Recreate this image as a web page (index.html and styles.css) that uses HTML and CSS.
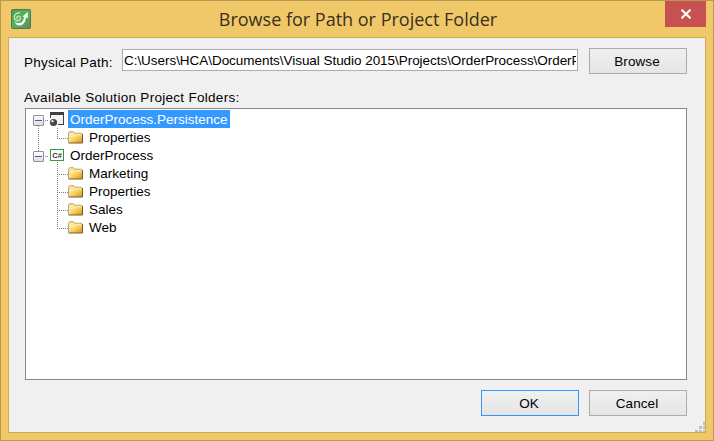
FILE: index.html
```html
<!DOCTYPE html>
<html lang="en">
<head>
<meta charset="utf-8">
<title>Browse for Path or Project Folder</title>
<link rel="stylesheet" href="styles.css">
</head>
<body>
<svg width="0" height="0" class="defs">
  <defs>
    <linearGradient id="gold" x1="0" y1="0" x2="1" y2="1"><stop offset="0" stop-color="#fff3b0"/><stop offset=".5" stop-color="#f8cf60"/><stop offset="1" stop-color="#d98f12"/></linearGradient>
    <linearGradient id="box" x1="0" y1="0" x2="0" y2="1"><stop offset="0" stop-color="#fff"/><stop offset="1" stop-color="#dcdcdc"/></linearGradient>
    <linearGradient id="leaf" x1="0" y1="0" x2="1" y2="1"><stop offset="0" stop-color="#4f9c50"/><stop offset=".5" stop-color="#58b45c"/><stop offset="1" stop-color="#5c8762"/></linearGradient>
    <symbol id="minus" viewBox="0 0 11 11">
      <rect x=".5" y=".5" width="10" height="10" rx=".5" fill="url(#box)" stroke="#919191"/>
      <path d="M2 5.5h7" stroke="#3c5fae"/>
    </symbol>
    <symbol id="folder" viewBox="0 0 16 13">
      <path d="M.5 11.5V2.200L1.500.7h4l1 1.500h7v3" fill="#f5e6a4" stroke="#c0a865"/>
      <path d="M1.500 4.500h4l1.500-1.500h7.500v9h-13z" fill="url(#gold)"/>
      <path d="M.5 12H14.500V3" fill="none" stroke="#705d35"/>
      <path d="M2 5.300h4l1.500-1.500h6" fill="none" stroke="#fff6c4" stroke-width=".8"/>
    </symbol>
  </defs>
</svg>
<div class="window">
  <header class="titlebar">
    <svg class="logo" width="20" height="20" viewBox="0 0 20 20">
      <rect x=".5" y=".5" width="19" height="19" rx="1" fill="url(#leaf)" stroke="#4d7b4c"/>
      <path d="M6.800 10.300c-1.600-.3-1.300-3.100.6-3.300 2.400 0 2.800 3.400.6 4.600C5.300 12.500 3 10.500 3.300 7.800 3.600 5 6 3.400 9 4" fill="none" stroke="#d9efd9" stroke-width="1.100"/>
      <path d="M3.500 12.500c1.200 2.800 3 4.200 5.200 4 3.600-.3 5.800-3.500 6.300-8l1.900.6L16.600 3l-5 4.600 1.700.4c-.7 3.500-2.300 5.700-4.800 6-2 .2-3.500-.3-5-1.500z" fill="#fff"/>
    </svg>
    <h1 class="title">Browse for Path or Project Folder</h1>
    <button class="close" aria-label="Close"><svg width="12" height="10" viewBox="0 0 12 10"><path d="M1.500 .7l9 8.600M10.500 .7l-9 8.600" stroke="#fff" stroke-width="2.100"/></svg></button>
  </header>
  <main class="client">
    <div class="pathrow">
      <label class="pathlabel">Physical Path:</label>
      <div class="field"><span class="pathtext">C:\Users\HCA\Documents\Visual Studio 2015\Projects\OrderProcess\OrderP</span></div>
      <button class="btn">Browse</button>
    </div>
    <div class="caption">Available Solution Project Folders:</div>
    <div class="tree">
      <div class="row">
        <svg width="42" height="18" viewBox="0 0 42 18">
          <use href="#minus" x="7" y="5" width="11" height="11"/>
          <path class="dots" d="M12.500 16v2M19 10.500h4"/>
          <path d="M25 4h12v11h-8z" fill="#f2f2f2"/>
          <path d="M24 8V2h14v13h-6v-1h5V5H25v3z" fill="#3f3f3f"/>
          <circle cx="27.500" cy="12.500" r="3.600" fill="#444"/>
          <circle cx="26.500" cy="11.200" r="1.200" fill="#ddd"/>
        </svg>
        <span class="name selected w-persist">OrderProcess.Persistence</span>
      </div>
      <div class="row child">
        <svg width="61" height="18" viewBox="0 0 61 18">
          <path class="dots" d="M12.500 0v18M31.500 0v11M31 10.500h11"/>
          <use href="#folder" x="42" y="3" width="16" height="13"/>
        </svg>
        <span class="name">Properties</span>
      </div>
      <div class="row">
        <svg width="42" height="18" viewBox="0 0 42 18">
          <path class="dots" d="M12.500 0v5M19 10.500h4M31.500 16v2"/>
          <use href="#minus" x="7" y="5" width="11" height="11"/>
          <rect x="24.500" y="3.500" width="13" height="11" fill="#fff" stroke="#389a3c"/>
          <text x="26.300" y="11.800" class="cs">C#</text>
        </svg>
        <span class="name">OrderProcess</span>
      </div>
      <div class="row child">
        <svg width="61" height="18" viewBox="0 0 61 18"><path class="dots" d="M31.500 0v18M31 10.500h11"/><use href="#folder" x="42" y="3" width="16" height="13"/></svg>
        <span class="name">Marketing</span>
      </div>
      <div class="row child">
        <svg width="61" height="18" viewBox="0 0 61 18"><path class="dots" d="M31.500 0v18M31 10.500h11"/><use href="#folder" x="42" y="3" width="16" height="13"/></svg>
        <span class="name">Properties</span>
      </div>
      <div class="row child">
        <svg width="61" height="18" viewBox="0 0 61 18"><path class="dots" d="M31.500 0v18M31 10.500h11"/><use href="#folder" x="42" y="3" width="16" height="13"/></svg>
        <span class="name">Sales</span>
      </div>
      <div class="row child">
        <svg width="61" height="18" viewBox="0 0 61 18"><path class="dots" d="M31.500 0v11M31 10.500h11"/><use href="#folder" x="42" y="3" width="16" height="13"/></svg>
        <span class="name">Web</span>
      </div>
    </div>
    <div class="actions">
      <button class="btn primary">OK</button>
      <button class="btn">Cancel</button>
    </div>
    <svg class="grip" width="10" height="10" viewBox="0 0 10 10"><path d="M8 0h2v3H8zM4 4h3v3H4zM8 4h2v3H8zM0 8h3v2H0zM4 8h3v2H4zM8 8h2v2H8z" fill="#bfbfbf"/></svg>
  </main>
</div>
</body>
</html>
```
FILE: styles.css
```css
* { box-sizing: border-box; }
body { margin: 0; font: 13.5px/18px "Liberation Sans", Arial, sans-serif; color: #000; }
.defs { position: absolute; }
.window { width: 714px; height: 441px; border: 1px solid #b9994f; background: #f0c869; padding: 0 7px 7px; }
.titlebar { display: flex; height: 36px; align-items: flex-start; }
.logo { margin: 8px 0 0 3px; flex: none; }
.title { flex: 1; margin: 0; padding-left: 20px; text-align: center; font: 400 18px/37px "Open Sans", "Noto Sans", sans-serif; color: #3a3020; white-space: nowrap; }
.close { width: 41px; height: 26px; border: 0; padding: 0; background: #c75050; display: flex; align-items: center; justify-content: center; }
.client { position: relative; height: 396px; border: 1px solid #cfab57; background: #f0f0f0; padding: 10px 18px 0 16px; }
.pathrow { display: flex; height: 26px; }
.pathlabel { width: 98px; margin-left: -1px; padding-top: 6px; white-space: nowrap; letter-spacing: .22px; }
.field { width: 456px; height: 22px; margin-top: 1px; margin-right: 11px; flex: none; padding: 0 1px 0 1px; background: #fff; border: 1px solid #abadb3; }
.pathtext { display: block; overflow: hidden; white-space: nowrap; line-height: 21px; letter-spacing: -.045px; }
.btn { width: 98px; height: 26px; flex: none; padding: 1px 2px 0 0; border: 1px solid #acacac; background: linear-gradient(#f0f0f0, #e5e5e5); font: inherit; letter-spacing: .1px; color: #000; }
.primary { border-color: #3399ff; }
.caption { margin: 15px 0 0 -1px; height: 19px; line-height: 18px; white-space: nowrap; letter-spacing: .29px; }
.tree { height: 272px; background: #fff; border: 1px solid #828790; padding-top: 1px; }
.row { display: flex; height: 18px; }
.row svg { flex: none; }
.name { padding: 0 2px; line-height: 20px; white-space: nowrap; }
.selected { background: #3399ff; color: #fff; }
.w-persist { width: 162px; }
.dots { fill: none; stroke: #808080; stroke-width: 1; stroke-dasharray: 1 1; shape-rendering: crispEdges; }
.cs { font: 700 7.500px "Liberation Sans", sans-serif; fill: #333; }
.actions { display: flex; justify-content: flex-end; gap: 10px; margin-top: 10px; }
.grip { position: absolute; right: 0; bottom: 0; }
```
